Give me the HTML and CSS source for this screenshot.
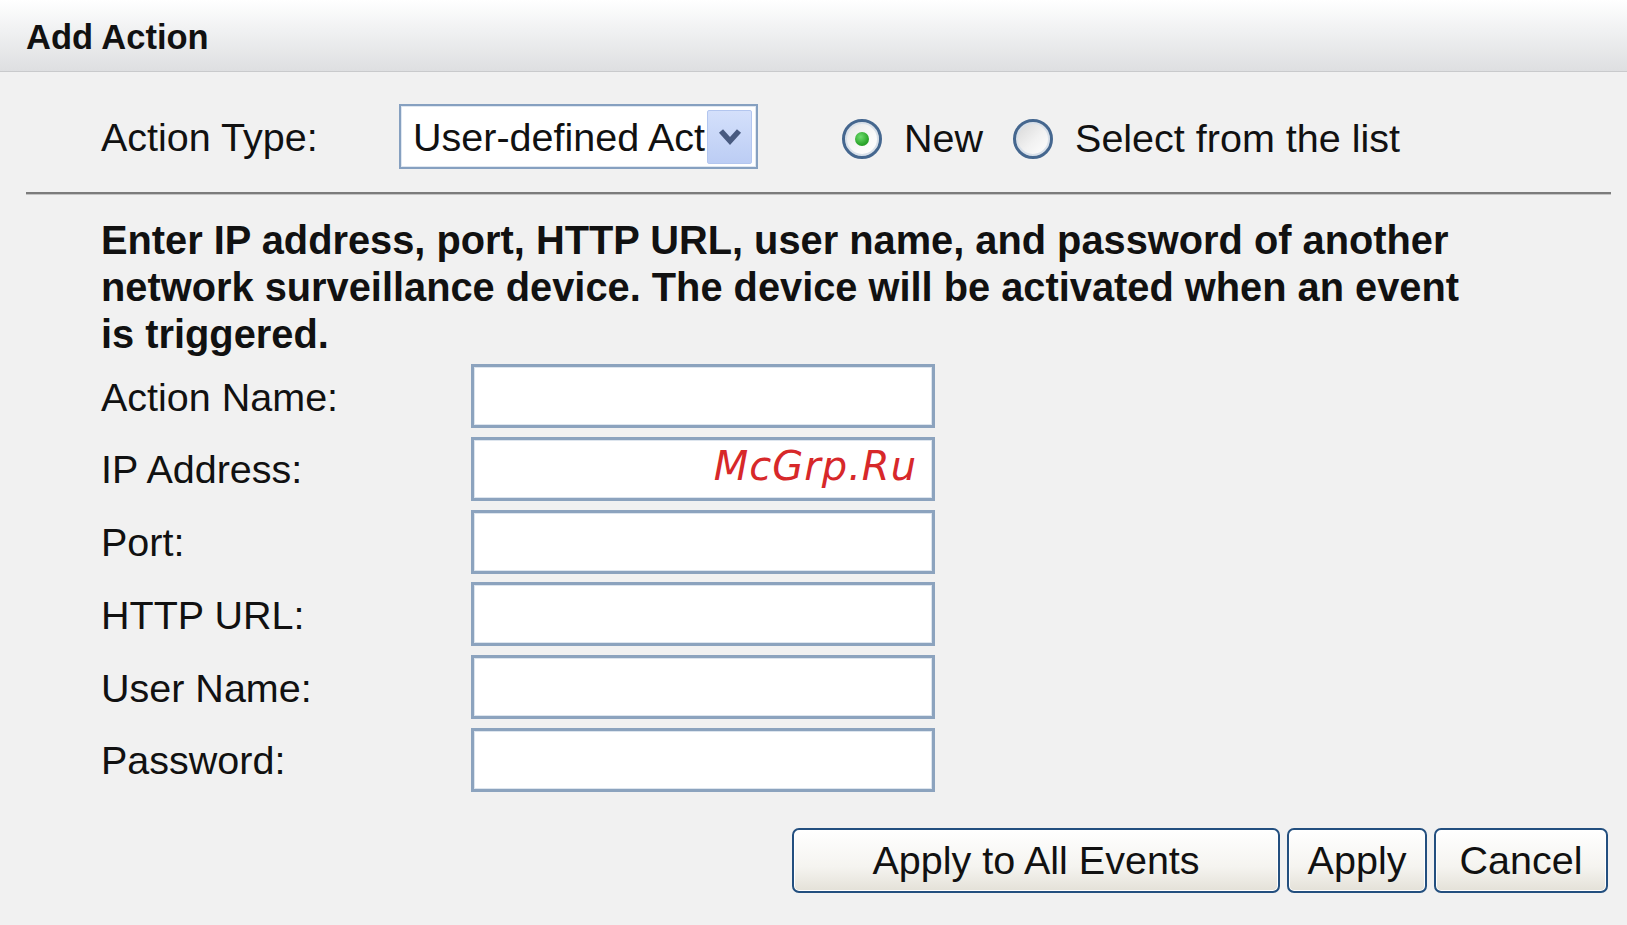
FILE: index.html
```html
<!DOCTYPE html>
<html>
<head>
<meta charset="utf-8">
<title>Add Action</title>
<link rel="stylesheet" href="styles.css">
</head>
<body>
<div class="header"><span class="title">Add Action</span></div>

<div class="type-row">
  <span class="type-label">Action Type:</span>
  <div class="select">
    <span class="select-text">User-defined Act</span>
    <span class="select-btn">
      <svg width="26" height="20" viewBox="0 0 26 20"><polyline points="4,4 13,14 22,4" fill="none" stroke="#485a80" stroke-width="5.5" stroke-linejoin="miter"/></svg>
    </span>
  </div>
  <div class="radios">
    <label class="radio"><span class="dot checked"><span class="pip"></span></span>New</label>
    <label class="radio"><span class="dot"></span>Select from the list</label>
  </div>
</div>

<div class="sep"></div>

<p class="desc">Enter IP address, port, HTTP URL, user name, and password of another network surveillance device. The device will be activated when an event is triggered.</p>

<div class="form">
  <span class="flabel">Action Name:</span><div class="input"></div>
  <span class="flabel">IP Address:</span><div class="input wm-host"><span class="watermark">McGrp.Ru</span></div>
  <span class="flabel">Port:</span><div class="input"></div>
  <span class="flabel">HTTP URL:</span><div class="input"></div>
  <span class="flabel">User Name:</span><div class="input"></div>
  <span class="flabel">Password:</span><div class="input"></div>
</div>

<div class="buttons">
  <button class="btn btn-all">Apply to All Events</button>
  <button class="btn btn-apply">Apply</button>
  <button class="btn btn-cancel">Cancel</button>
</div>
</body>
</html>
```

FILE: styles.css
```css
html, body {
  margin: 0;
  padding: 0;
}
body {
  background: #f1f1f1;
  font-family: "Liberation Sans", Arial, sans-serif;
  color: #111;
  width: 1627px;
  height: 925px;
  overflow: hidden;
}
.header {
  box-sizing: border-box;
  height: 72px;
  border-bottom: 1px solid #c9cacc;
  background: linear-gradient(#ffffff 0%, #f1f2f3 40%, #dedfe1 100%);
  display: flex;
  align-items: center;
  padding: 4px 0 0 26px;
}
.title {
  font-weight: bold;
  font-size: 34.5px;
  color: #111;
}
.type-row {
  display: flex;
  align-items: center;
  margin-top: 32px;
  padding-left: 101px;
  height: 65px;
}
.type-label {
  flex: none;
  width: 298px;
  font-size: 39.5px;
  padding-top: 2px;
}
.select {
  flex: none;
  box-sizing: border-box;
  width: 359px;
  height: 65px;
  border: 2px solid #86a0c0;
  box-shadow: inset 0 0 0 1px #dfe7f1;
  background: #fff;
  display: flex;
  align-items: center;
  padding: 0 4px 0 12px;
  overflow: hidden;
}
.select-text {
  flex: 1;
  font-size: 39.5px;
  white-space: nowrap;
  overflow: hidden;
  padding-top: 2px;
}
.select-btn {
  flex: none;
  box-sizing: border-box;
  width: 45px;
  height: 54px;
  border: 1px solid #b3c6ef;
  border-radius: 2px;
  background: linear-gradient(#d4e0fb, #bccdf4);
  display: flex;
  align-items: center;
  justify-content: center;
}
.radios {
  display: flex;
  align-items: center;
  gap: 30px;
  margin-left: 84px;
  padding-top: 4px;
}
.radio {
  display: flex;
  align-items: center;
  gap: 22px;
  font-size: 39.5px;
}
.dot {
  box-sizing: border-box;
  width: 40px;
  height: 40px;
  border-radius: 50%;
  border: 3px solid #45678f;
  box-shadow: inset 0 0 0 2px #d9e1ea;
  background: linear-gradient(135deg, #d6d6d6 0%, #f2f2f2 55%, #ffffff 100%);
  display: flex;
  align-items: center;
  justify-content: center;
}
.dot.checked {
  background: linear-gradient(135deg, #e4e4e4 0%, #fafafa 60%, #ffffff 100%);
}
.pip {
  width: 14px;
  height: 14px;
  border-radius: 50%;
  background: radial-gradient(circle at 40% 35%, #6fdc6f 0%, #2ea82e 60%, #1c8a1c 100%);
}
.sep {
  height: 2px;
  background: #7c7c7c;
  border-bottom: 1px solid #c4c4c4;
  margin: 23px 16px 0 26px;
}
.desc {
  margin: 22px 0 6px 101px;
  width: 1390px;
  font-weight: bold;
  font-size: 39.8px;
  line-height: 47px;
  color: #111;
}
.form {
  display: grid;
  grid-template-columns: 370px 464px;
  row-gap: 8.8px;
  padding-left: 101px;
  align-items: center;
}
.flabel {
  font-size: 39.5px;
  white-space: nowrap;
  padding-top: 2px;
}
.input {
  box-sizing: border-box;
  height: 64px;
  background: #fff;
  border: 3px solid #8ca3be;
  box-shadow: inset 0 0 0 1px #dde5ee;
}
.wm-host {
  position: relative;
}
.watermark {
  position: absolute;
  right: 15px;
  top: 6px;
  font-family: "DejaVu Sans", sans-serif;
  font-style: italic;
  font-size: 40px;
  line-height: 1;
  letter-spacing: 1px;
  color: #d7282a;
}
.buttons {
  display: flex;
  justify-content: flex-end;
  gap: 7px;
  margin-top: 36px;
  padding-right: 19px;
}
.btn {
  box-sizing: border-box;
  height: 65px;
  border: 2px solid #234f7f;
  border-radius: 7px;
  background: linear-gradient(#ffffff 0%, #f5f4f0 60%, #e4e1d8 100%);
  box-shadow: inset 0 0 0 1px #ffffff;
  font-family: "Liberation Sans", Arial, sans-serif;
  font-size: 39.5px;
  color: #111;
  padding: 0;
}
.btn-all { width: 488px; }
.btn-apply { width: 140px; }
.btn-cancel { width: 174px; }
```
